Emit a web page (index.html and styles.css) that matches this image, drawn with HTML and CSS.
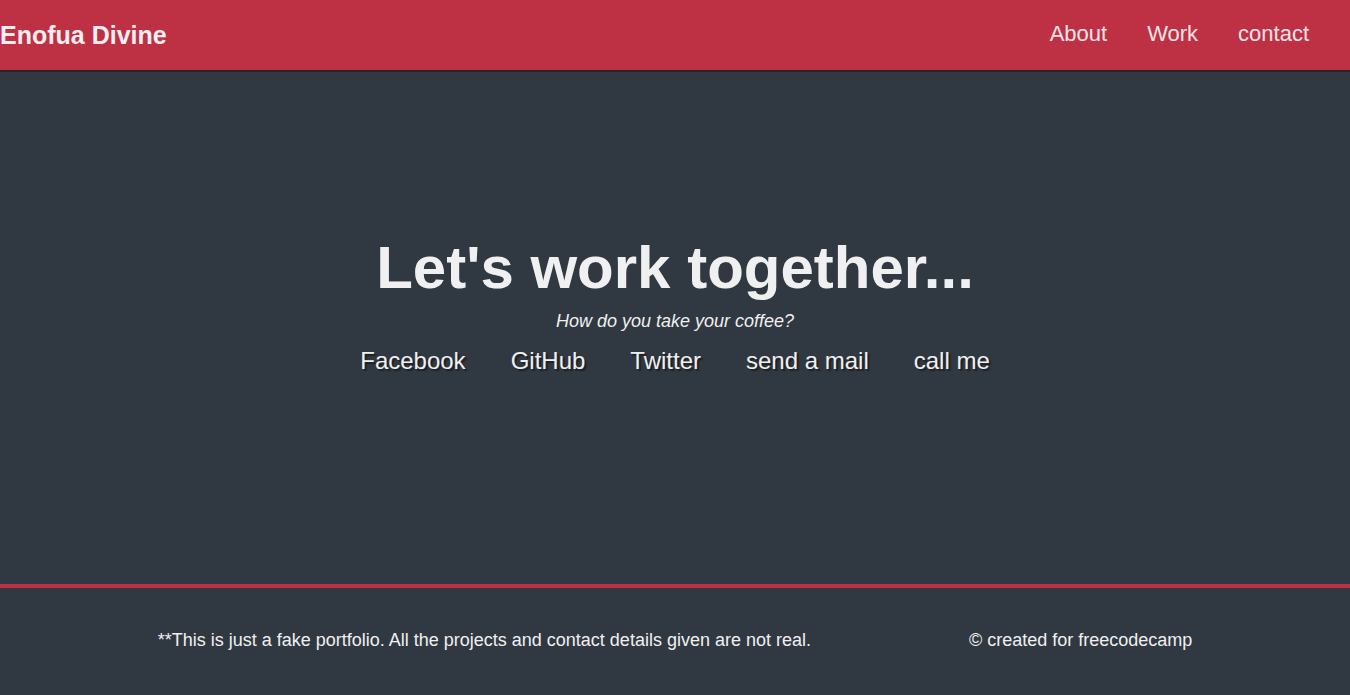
FILE: index.html
```html
<!DOCTYPE html>
<html lang="en">
<head>
<meta charset="utf-8">
<title>Enofua Divine</title>
<link rel="stylesheet" href="styles.css">
</head>
<body>
<nav class="navbar">
  <a class="brand" href="#">Enofua Divine</a>
  <ul class="nav-list">
    <li><a href="#about">About</a></li>
    <li><a href="#work">Work</a></li>
    <li><a href="#contact">contact</a></li>
  </ul>
</nav>
<section class="contact" id="contact">
  <h1 class="contact-title">Let's work together...</h1>
  <p class="contact-sub">How do you take your coffee?</p>
  <div class="contact-links">
    <a href="#">Facebook</a>
    <a href="#">GitHub</a>
    <a href="#">Twitter</a>
    <a href="#">send a mail</a>
    <a href="#">call me</a>
  </div>
</section>
<footer class="footer">
  <p class="footer-note">**This is just a fake portfolio. All the projects and contact details given are not real.</p>
  <p class="footer-credit">© created for freecodecamp</p>
</footer>
</body>
</html>
```
FILE: styles.css
```css
* { box-sizing: border-box; }
html, body {
  margin: 0;
  padding: 0;
  height: 100%;
}
body {
  background: #303841;
  color: #f0f0f0;
  font-family: "Liberation Sans", Arial, sans-serif;
  overflow: hidden;
  display: flex;
  flex-direction: column;
}
a { color: inherit; text-decoration: none; }

.navbar {
  height: 72px;
  flex: none;
  background: #be3144;
  border-bottom: 2px solid #28232b;
  display: flex;
  align-items: center;
  justify-content: space-between;
  padding-right: 21px;
}
.brand {
  font-weight: bold;
  font-size: 25px;
  color: #f6eef0;
}
.nav-list {
  list-style: none;
  display: flex;
  margin: 0 0 3px;
  padding: 0;
}
.nav-list a {
  display: block;
  padding: 0 20px;
  font-size: 22px;
  color: #f5e3e6;
}

.contact {
  height: 512px;
  flex: none;
  display: flex;
  flex-direction: column;
  align-items: center;
  padding-top: 161px;
}
.contact-title {
  margin: 0;
  font-size: 60px;
  line-height: 70px;
  font-weight: bold;
}
.contact-sub {
  margin: 8px 0 0;
  font-size: 18px;
  font-style: italic;
  line-height: 20px;
}
.contact-links {
  display: flex;
  gap: 45px;
  margin-top: 16px;
}
.contact-links a {
  font-size: 24px;
  line-height: 28px;
  text-shadow: 2px 2px 1px #1f2024;
}

.footer {
  flex: 1;
  border-top: 4px solid #be3144;
  display: flex;
  justify-content: center;
  align-items: center;
  gap: 158px;
  padding-bottom: 2px;
}
.footer p {
  margin: 0;
  font-size: 18px;
}
```
